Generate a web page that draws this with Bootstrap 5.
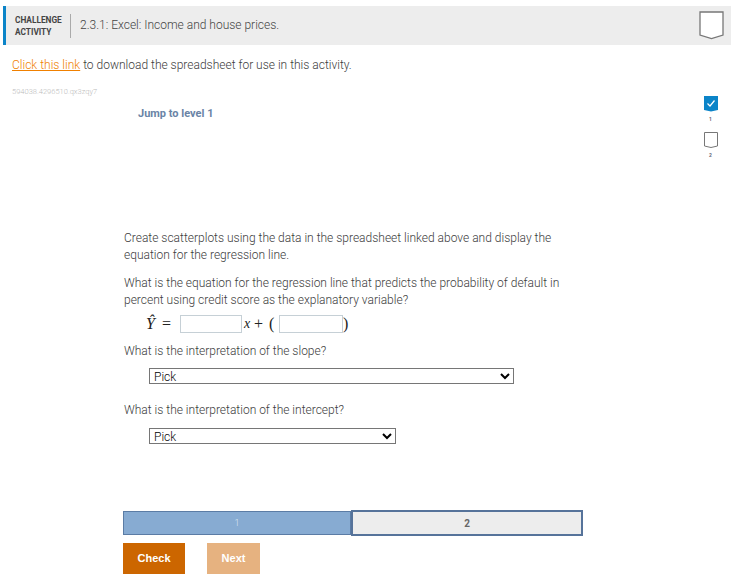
<!DOCTYPE html>
<html lang="en">
<head>
<meta charset="utf-8">
<title>Challenge activity</title>
<link rel="stylesheet" href="https://cdn.jsdelivr.net/npm/bootstrap@5.3.0/dist/css/bootstrap.min.css">
<style>
html,body{height:100%}
body{background:#fff;font-family:Roboto,"Liberation Sans",sans-serif;font-weight:300;color:#3c3c3c;font-size:12px;line-height:17px;overflow:hidden}
.page-shell{padding:6px 0 0 3px;height:587px}
.act-head{height:39px;background:#ededed;border-left:3px solid #0b84c8}
.act-kind{width:64px;padding-left:9px;font-size:8.3px;line-height:12px;font-weight:700;color:#444}
.act-rule{width:1px;height:24px;background:#aaa}
.act-title{font-size:12px;margin-left:9px;color:#444;font-weight:300}
.act-flag{margin-left:auto;margin-right:7px;width:25px;height:29px;display:block}
.act-body{position:relative}
.dl-line{margin:12px 0 0 9px;height:17px;font-size:12px}
.dl-line a{color:#f08000;text-decoration:underline}
.seed{margin:13px 0 0 9px;font-size:7.5px;line-height:9px;color:#bbb}
.jump{margin:11px 0 0 135px;font-weight:700;font-size:11px;line-height:14px;color:#6a84a6}
.qcol{margin:109px 0 0 121px;width:440px}
.q1{margin:0 0 11px}
.q2{margin:0 0 6px}
.q3{margin:0 0 8px}
.q4{margin:0 0 9px}
.eqn{height:18px;margin:0 0 10px 22px;font-family:"Liberation Serif",serif;font-size:16px;line-height:18px;color:#222;font-weight:400}
.eq-y{width:16px;font-style:italic}
.eq-e{width:18px}
.eq-x{width:12px;padding-left:2px;font-style:italic;font-size:14px}
.eq-p{width:15px}
.eq-o{width:10px}
.eqn-in{width:62px;height:18px;background:#fff;border:1px solid #c6d0d6;display:block}
.eqn-in2{width:64px}
.pick{display:block;height:16px;margin:0 0 0 25px;border:1px solid #767676;border-radius:0;background:#fff;font-family:Roboto,"Liberation Sans",sans-serif;font-weight:300;font-size:12px;line-height:14px;padding:0 0 2px;color:#000}
.pick-a{width:365px;margin-bottom:18px}
.pick-b{width:247px}
.stair{margin:66px 0 0 120px;width:460px;height:25px}
.stair-a{width:228px;height:24px;background:#87abd2;border:1px solid #5b7ca5;color:#dbe6f1;font-size:9px;margin-top:1px}
.stair-b{width:232px;height:26px;background:#ededed;border:2px solid #56739a;color:#666;font-size:10px;font-weight:700}
.act-btns{margin:8px 0 0 120px;gap:22px}
.btn-go,.btn-nx{height:31px;border:0;border-radius:0;color:#fff;font-family:"Liberation Sans",sans-serif;font-size:11px;font-weight:700;padding:0}
.btn-go{width:62px;background:#cc6600}
.btn-nx{width:53px;background:#e6b280}
.lvl-rail{position:absolute;left:699px;top:39px;width:17px;text-align:center;font-size:5px;line-height:7px;font-weight:700}
.lvl-rail svg{display:block;margin:0 auto}
.lvl-rail span{display:block;margin:4px 0 9px;color:#667}
</style>
</head>
<body>
<div class="page-shell">
  <div class="act-head d-flex align-items-center">
    <div class="act-kind">CHALLENGE<br>ACTIVITY</div>
    <div class="act-rule"></div>
    <div class="act-title">2.3.1: Excel: Income and house prices.</div>
    <svg class="act-flag" viewBox="0 0 25 29"><path d="M1 1H24V24L12.5 27.500 1 24Z" fill="#fff" stroke="#777" stroke-width="1.300"/></svg>
  </div>
  <div class="act-body">
    <p class="dl-line"><a href="#">Click this link</a> to download the spreadsheet for use in this activity.</p>
    <div class="seed">594038.4296510.qx3zqy7</div>
    <div class="jump">Jump to level 1</div>
    <div class="qcol">
      <p class="q1">Create scatterplots using the data in the spreadsheet linked above and display the equation for the regression line.</p>
      <p class="q2">What is the equation for the regression line that predicts the probability of default in percent using credit score as the explanatory variable?</p>
      <div class="eqn d-flex align-items-center">
        <span class="eq-y">Ŷ</span><span class="eq-e">=</span><span class="eqn-in"></span><span class="eq-x">x</span><span class="eq-p">+</span><span class="eq-o">(</span><span class="eqn-in eqn-in2"></span><span>)</span>
      </div>
      <p class="q3">What is the interpretation of the slope?</p>
      <select class="pick pick-a"><option>Pick</option></select>
      <p class="q4">What is the interpretation of the intercept?</p>
      <select class="pick pick-b"><option>Pick</option></select>
    </div>
    <div class="stair d-flex">
      <div class="stair-a d-flex align-items-center justify-content-center">1</div>
      <div class="stair-b d-flex align-items-center justify-content-center">2</div>
    </div>
    <div class="act-btns d-flex">
      <button class="btn-go" type="button">Check</button>
      <button class="btn-nx" type="button">Next</button>
    </div>
    <div class="lvl-rail">
      <svg width="14" height="16" viewBox="0 0 14 16"><path d="M0 0H14V14L7 15.500 0 14Z" fill="#0b84c8"/><path d="M3.500 7.500L6 10 10.500 4.500" fill="none" stroke="#fff" stroke-width="1.200"/></svg>
      <span>1</span>
      <svg width="14" height="16" viewBox="0 0 14 16"><path d="M.5.500H13.500V14L7 15.500 .5 14Z" fill="#fff" stroke="#777"/></svg>
      <span>2</span>
    </div>
  </div>
</div>
</body>
</html>
